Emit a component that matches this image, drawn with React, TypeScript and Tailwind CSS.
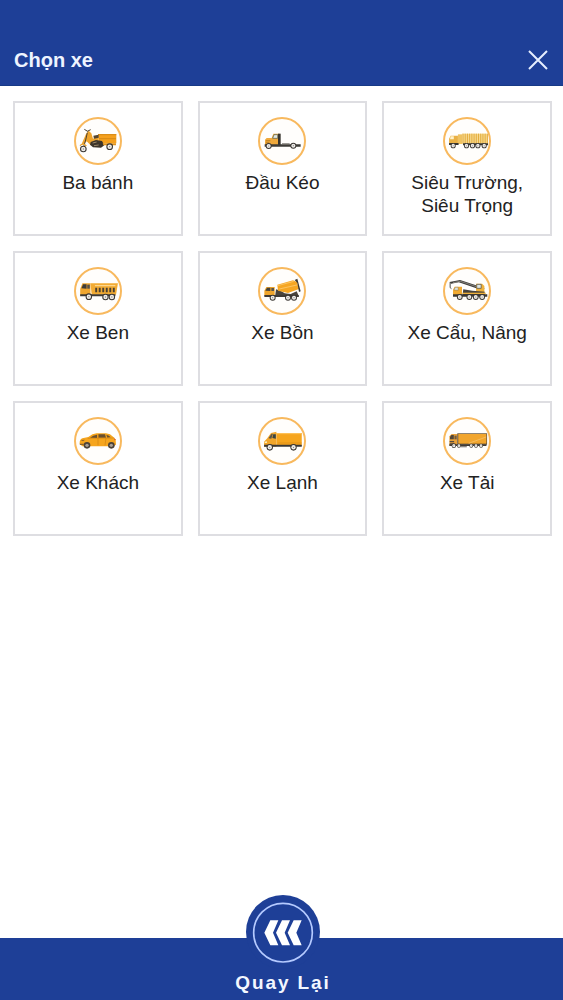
import type { ReactNode } from "react";

const Wheel = ({ x, y, r = 8 }: { x: number; y: number; r?: number }) => (
  <>
    <circle cx={x} cy={y} r={r} fill="#3a3632" />
    <circle cx={x} cy={y} r={r * 0.68} fill="#efedea" />
    <circle cx={x} cy={y} r={r * 0.2} fill="#8b8781" />
  </>
);

const Tricycle = () => (
  <>
    <path d="M90 68h55v28h-51z" fill="#f5a01d" />
    <path d="M90 70h55M92 82h52" stroke="#c67d13" strokeWidth="2" />
    <path d="M54 68l8-10 8 8 5 16 17-6v20l-24 6-12-12-8 8-8 2 6-14z" fill="#efa42c" />
    <path d="M49 54l10 6M58 60l10-5M58 64l-5 22-7 24" fill="none" stroke="#4a4030" strokeWidth="3" />
    <path d="M76 73l16-3v9l-14 3z" fill="#54452f" />
    <path d="M68 92l16-6 18 3 7 13-10 7-24-1-9-8z" fill="#3c342a" />
    <path d="M74 95l12-3M78 103l14-2" stroke="#c9b18b" strokeWidth="2" />
    <path d="M104 96h40v6h-38z" fill="#e0941d" />
    <Wheel x={46} y={113} r={10} />
    <Wheel x={125} y={106} r={10} />
    <path d="M36 103q9-10 19 1" fill="none" stroke="#e9a22f" strokeWidth="4" />
  </>
);

const Tractor = () => (
  <>
    <path d="M39 85l5-5h15l5-13h19v34H39z" fill="#efa93c" />
    <path d="M62 81l4-11h11v11z" fill="#e3e9e4" stroke="#4f5a48" strokeWidth="2" />
    <path d="M78 67h8v35h-8z" fill="#37342e" />
    <path d="M38 99h108v7H38z" fill="#3d3b37" />
    <path d="M90 98h23" stroke="#6c6862" strokeWidth="4" />
    <path d="M42 88h13M42 93h10" stroke="#a96f18" strokeWidth="2" />
    <Wheel x={50} y={104} r={9} />
    <Wheel x={124} y={103} r={9} />
  </>
);

const LongTruck = () => (
  <g transform="translate(2 0) scale(0.95 1)">
    <path d="M36 82l5-9h23v27H36z" fill="#e9b043" />
    <path d="M41 75h10v9H39z" fill="#fff1c9" />
    <path d="M64 69h14v29H64z" fill="#efc261" />
    <path d="M78 67h80v30H78z" fill="#f7d98e" />
    <path d="M80 67v30M87 67v30M94 67v30M101 67v30M108 67v30M115 67v30M122 67v30M129 67v30M136 67v30M143 67v30M150 67v30M157 67v30" stroke="#e2ab3c" strokeWidth="3" />
    <path d="M36 95h30v6H36zM80 96h79v6H80z" fill="#37342f" />
    <Wheel x={49} y={103} />
    <Wheel x={91} y={103} />
    <Wheel x={110} y={103} />
    <Wheel x={127} y={103} />
    <Wheel x={147} y={103} />
  </g>
);

const DumpTruck = () => (
  <g transform="translate(2 0) scale(0.96 1)">
    <path d="M36 83l7-17h25v37H36z" fill="#f0a62e" />
    <path d="M40 81l5-12h11v13z" fill="#3e3c37" />
    <path d="M58 70h8v12h-8z" fill="#54504a" />
    <path d="M68 66h86l-6 34H72z" fill="#f2ab33" />
    <path d="M83 79h6v14h-6zM94 79h6v14h-6zM105 79h6v14h-6zM116 79h6v14h-6zM127 79h6v14h-6zM138 79h6v14h-6z" fill="#4b4030" />
    <path d="M82 73h64" stroke="#ffe0a0" strokeWidth="3" />
    <path d="M36 99h110v6H36z" fill="#3e3a35" />
    <Wheel x={63} y={106} r={10} />
    <Wheel x={115} y={107} r={10} />
    <Wheel x={135} y={107} r={10} />
  </g>
);

const MixerTruck = () => (
  <>
    <path d="M37 88l6-11h25v27H37z" fill="#efa52c" />
    <path d="M40 88l5-9h10v10z" fill="#45423b" />
    <path d="M58 80h8v9h-8z" fill="#57534b" />
    <path d="M72 84l14 4 12 8 18 2 18-8 6 13v4H69z" fill="#4a443c" />
    <path d="M76 70l47-13 13 6 5 20-33 12-30-7z" fill="#f5a623" />
    <path d="M77 73l48-13M82 83l57-13" stroke="#ffd382" strokeWidth="2" />
    <path d="M128 56l8-4 10 38-5 2-5-27z" fill="#3c3833" />
    <path d="M37 101h103v6H37z" fill="#3e3a35" />
    <Wheel x={62} y={109} r={9} />
    <Wheel x={108} y={109} r={9} />
    <Wheel x={126} y={109} r={9} />
  </>
);

const CraneTruck = () => (
  <g transform="translate(2 0) scale(0.96 1)">
    <path d="M37 62l33-6 76 24-2 8-78-25-24 4z" fill="#3d3c39" />
    <path d="M48 64l23-4 60 19" fill="none" stroke="#aaa69d" strokeWidth="2" />
    <path d="M39 63v16l4 3" fill="none" stroke="#4a4844" strokeWidth="3" />
    <path d="M120 67h19l7 7v18h-26z" fill="#efb13c" />
    <path d="M122 69h14v12h-14z" fill="#dce5e5" stroke="#45423c" strokeWidth="2" />
    <path d="M48 85l5-9h23v28H48z" fill="#f1aa31" />
    <path d="M51 86l4-8h9v9z" fill="#dfe4df" stroke="#56503f" />
    <path d="M80 84l28 4 39 3v10H78z" fill="#46423c" />
    <path d="M78 94h72v4H78z" fill="#efb13c" />
    <path d="M48 99h107v7H48z" fill="#3a3733" />
    <Wheel x={69} y={107} r={9} />
    <Wheel x={99} y={107} r={9} />
    <Wheel x={119} y={107} r={9} />
    <Wheel x={139} y={107} r={9} />
  </g>
);

const Car = () => (
  <>
    <path d="M35 98q-1-14 8-17l18-4q12-10 25-11h28q13 1 22 11l7 8 1 15-8 5H43z" fill="#f6a51d" />
    <path d="M66 79q9-8 21-9v10zM91 69h20l3 10H91zM115 70q9 2 13 8l-10 1z" fill="#69502f" />
    <path d="M90 69v33M114 80l-3 22M59 81l80-1" fill="none" stroke="#cf8413" strokeWidth="2" />
    <path d="M38 86l13-1-6 5zM35 97h12v4H36z" fill="#8d642c" />
    <path d="M139 80l5 6-5 1z" fill="#d9552b" />
    <circle cx="57" cy="102" r="10" fill="#4b4238" />
    <circle cx="57" cy="102" r="5" fill="#aaa093" />
    <circle cx="130" cy="102" r="10" fill="#4b4238" />
    <circle cx="130" cy="102" r="5" fill="#aaa093" />
  </>
);

const Van = () => (
  <g transform="translate(2 0) scale(0.95 1)">
    <path d="M75 65h80v39H75z" fill="#f6a51d" />
    <path d="M76 67h78" stroke="#ffc661" strokeWidth="3" />
    <path d="M36 91l10-10 12-16 17-4v45H36z" fill="#f2a62a" />
    <path d="M50 81l9-13 5-1-5 15z" fill="#5b5648" />
    <path d="M62 80l3-11h8v13z" fill="#394544" />
    <path d="M36 100h119v6H36z" fill="#383736" />
    <path d="M38 91l7-1v5h-7z" fill="#fff1bd" />
    <path d="M80 95h75" stroke="#d48a18" strokeWidth="2" />
    <Wheel x={54} y={108} r={10} />
    <Wheel x={129} y={108} r={10} />
  </g>
);

const BoxTruck = () => (
  <g transform="translate(2 0) scale(0.95 1)">
    <path d="M37 75l7-7h18v35H37z" fill="#e9a13a" />
    <path d="M39 77l4-6h8v13H39z" fill="#514638" />
    <path d="M53 73h7v11h-7z" fill="#705a3c" />
    <path d="M38 89h14v4H38zM38 96h14v4H38z" fill="#534a40" />
    <path d="M62 66h94v34H62z" fill="#59472e" />
    <path d="M65 68h89v29H65z" fill="#f1a52d" />
    <path d="M98 96l55-19" stroke="#f8c876" strokeWidth="2" />
    <path d="M37 99h117v5H37z" fill="#413b35" />
    <path d="M72 104h20v4H72z" fill="#8a8580" />
    <Wheel x={51} y={103} r={7} />
    <Wheel x={67} y={103} r={6} />
    <Wheel x={106} y={103} r={6} />
    <Wheel x={121} y={103} r={6} />
    <Wheel x={137} y={103} r={6} />
  </g>
);

const vehicles: { name: string; icon: ReactNode }[] = [
  { name: "Ba bánh", icon: <Tricycle /> },
  { name: "Đầu Kéo", icon: <Tractor /> },
  { name: "Siêu Trường, Siêu Trọng", icon: <LongTruck /> },
  { name: "Xe Ben", icon: <DumpTruck /> },
  { name: "Xe Bồn", icon: <MixerTruck /> },
  { name: "Xe Cẩu, Nâng", icon: <CraneTruck /> },
  { name: "Xe Khách", icon: <Car /> },
  { name: "Xe Lạnh", icon: <Van /> },
  { name: "Xe Tải", icon: <BoxTruck /> },
];

const VehicleCard = ({ name, icon }: { name: string; icon: ReactNode }) => (
  <button
    type="button"
    className="flex min-h-[135px] flex-col items-center gap-[6px] border-2 border-[#dedee2] bg-white px-5 pt-[14px] text-[19px] leading-[23px] text-[#222222]"
  >
    <svg viewBox="18 17 144 144" className="size-12 shrink-0" aria-hidden="true">
      <circle cx="90" cy="89" r="69" fill="#fffefc" stroke="#f8b95e" strokeWidth="6" />
      {icon}
    </svg>
    <span>{name}</span>
  </button>
);

export default function App() {
  return (
    <div className="flex min-h-screen flex-col bg-white font-['Liberation_Sans',Arial,sans-serif]">
      <header className="flex items-center justify-between border-b border-[#173a86] bg-[#1e3f97] pt-[36px] pr-[15px] pb-[1px] pl-[14px]">
        <h1 className="text-[20px] leading-[48px] font-bold text-[#eef4ff]">Chọn xe</h1>
        <button type="button" aria-label="Đóng" className="text-[#e6eeff]">
          <svg viewBox="0 0 20 20" className="size-5" fill="none" stroke="currentColor" strokeWidth="2">
            <path d="M1 1l18 18M19 1L1 19" />
          </svg>
        </button>
      </header>

      <main className="grid grid-cols-3 gap-[15px] pt-[15px] pr-[11px] pb-16 pl-[13px]">
        {vehicles.map((vehicle) => (
          <VehicleCard key={vehicle.name} name={vehicle.name} icon={vehicle.icon} />
        ))}
      </main>

      <footer className="mt-auto flex h-[62px] justify-center bg-[#1e3f97] pl-[3px]">
        <button
          type="button"
          className="-mt-[43px] flex flex-col items-center text-[19px] leading-6 font-bold tracking-widest text-[#f3f7ff]"
        >
          <svg viewBox="78 30 222 228" className="h-[76px] w-[74px]" aria-hidden="true">
            <circle cx="189" cy="141" r="111" fill="#1e3f97" />
            <circle cx="189" cy="143" r="88" fill="none" stroke="#b5caff" strokeWidth="5" />
            <g fill="#ffffff">
              <path d="M133 143l18-37h24l-16 37 16 38h-24z" />
              <path d="M168 143l18-37h24l-16 37 16 38h-24z" />
              <path d="M203 143l18-37h24l-16 37 16 38h-24z" />
            </g>
          </svg>
          <span>Quay Lại</span>
        </button>
      </footer>
    </div>
  );
}
